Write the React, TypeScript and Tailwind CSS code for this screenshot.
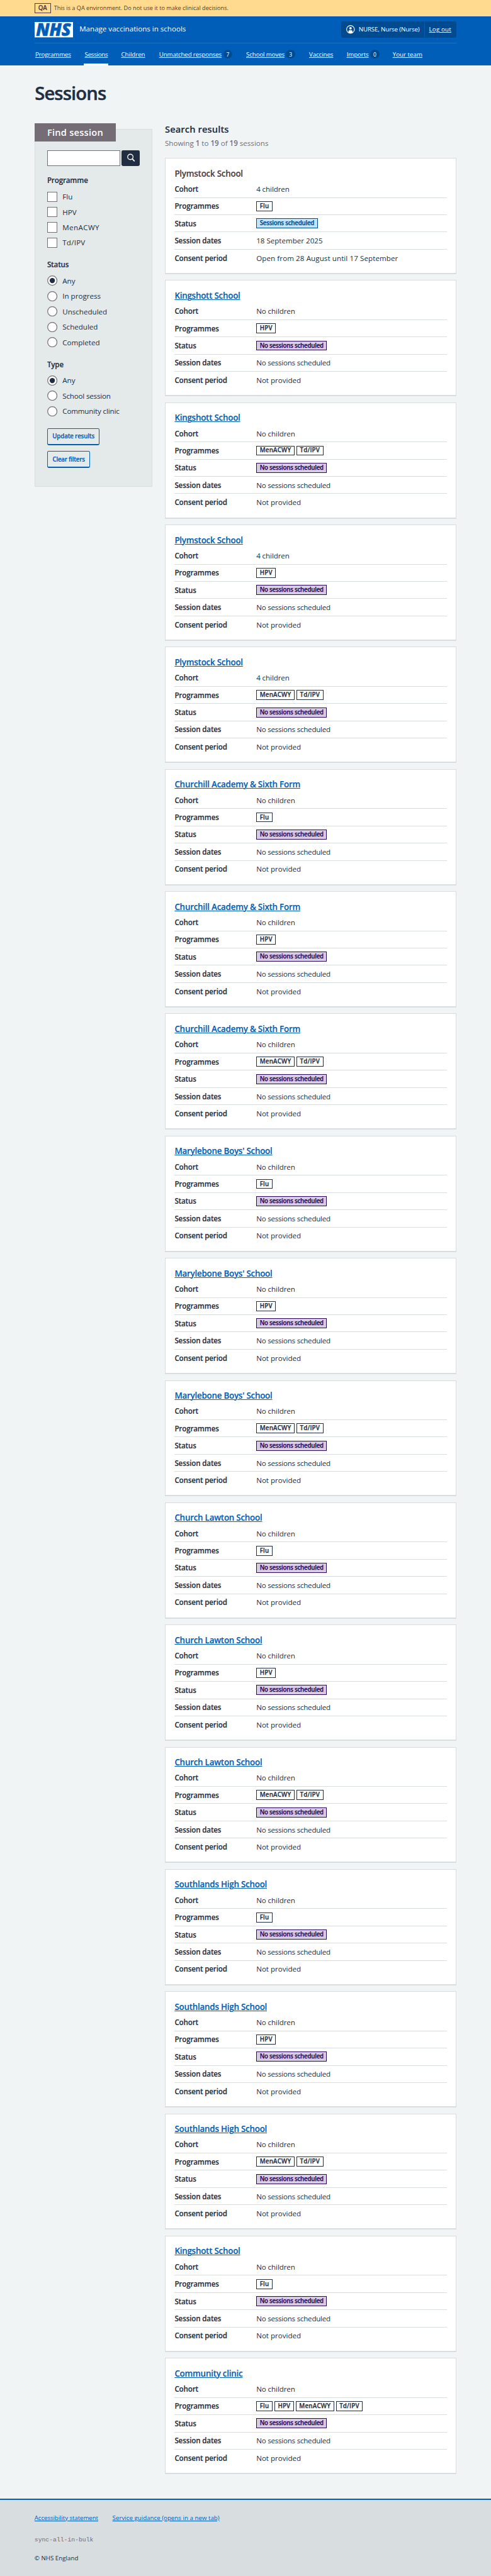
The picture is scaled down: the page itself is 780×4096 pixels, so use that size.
import type { ReactNode } from "react";

type Session = {
  name: string;
  cohort?: string;
  programmes: string[];
  visited?: boolean;
};

const FLU = ["Flu"];
const HPV = ["HPV"];
const DOUBLES = ["MenACWY", "Td/IPV"];

const sessions: Session[] = [
  { name: "Plymstock School", cohort: "4 children", programmes: FLU, visited: true },
  { name: "Kingshott School", programmes: HPV },
  { name: "Kingshott School", programmes: DOUBLES },
  { name: "Plymstock School", cohort: "4 children", programmes: HPV },
  { name: "Plymstock School", cohort: "4 children", programmes: DOUBLES },
  { name: "Churchill Academy & Sixth Form", programmes: FLU },
  { name: "Churchill Academy & Sixth Form", programmes: HPV },
  { name: "Churchill Academy & Sixth Form", programmes: DOUBLES },
  { name: "Marylebone Boys' School", programmes: FLU },
  { name: "Marylebone Boys' School", programmes: HPV },
  { name: "Marylebone Boys' School", programmes: DOUBLES },
  { name: "Church Lawton School", programmes: FLU },
  { name: "Church Lawton School", programmes: HPV },
  { name: "Church Lawton School", programmes: DOUBLES },
  { name: "Southlands High School", programmes: FLU },
  { name: "Southlands High School", programmes: HPV },
  { name: "Southlands High School", programmes: DOUBLES },
  { name: "Kingshott School", programmes: FLU },
  { name: "Community clinic", programmes: ["Flu", "HPV", "MenACWY", "Td/IPV"] },
];

const navItems = [
  { label: "Programmes", box: "w-[78.6px]", text: "tracking-[-0.019em]" },
  { label: "Sessions", box: "w-[57.9px]", text: "tracking-[-0.03em]", current: true },
  { label: "Children", box: "w-[60.3px]", text: "tracking-[-0.005em]" },
  { label: "Unmatched responses", box: "w-[138.3px]", text: "tracking-[-0.016em]", count: 7 },
  { label: "School moves", box: "w-[99.9px]", text: "tracking-[-0.014em]", count: 3 },
  { label: "Vaccines", box: "w-[59.7px]", text: "tracking-[-0.01em]" },
  { label: "Imports", box: "w-[73.1px]", text: "tracking-[-0.01em]", count: 0 },
  { label: "Your team", box: "", text: "" },
];

function NhsLogo() {
  return (
    <svg className="h-[24.4px] w-[61px] shrink-0 overflow-visible" viewBox="0 0 100 40" role="img" aria-label="NHS">
      <rect width="100" height="40" fill="#fff" />
      <text
        x="3.500"
        y="36.500"
        textLength="91"
        lengthAdjust="spacingAndGlyphs"
        fontFamily="'Open Sans', sans-serif"
        fontSize="45"
        fontWeight="800"
        fontStyle="italic"
        fill="#005eb8"
        stroke="#005eb8"
        strokeWidth="1"
      >
        NHS
      </text>
    </svg>
  );
}

function Header() {
  return (
    <header className="h-[78px] bg-[#005eb8] px-[54.8px] text-white">
      <div className="flex h-[43.4px] items-center justify-between border-b border-[#1f71c1]">
        <div className="flex items-center gap-[10.4px]">
          <NhsLogo />
          <span className="mb-[1.4px] text-[11.58px] leading-[18px]">Manage vaccinations in schools</span>
        </div>
        <div className="flex h-[25.6px] w-[183px] items-center rounded-[2.4px] bg-[#004b8f] text-[9.75px] leading-[15px]">
          <div className="flex h-[24.4px] w-[132.4px] items-center border-r border-[#005eb8] pl-[8.2px]">
            <svg className="mr-[5.8px] size-[13.6px] shrink-0" viewBox="0 0 22 22">
              <circle cx="11" cy="11" r="10" fill="none" stroke="#fff" strokeWidth="1.8" />
              <circle cx="11" cy="8.2" r="3.3" fill="#fff" />
              <path d="M5.8 20v-3.4c0-2.2 1.600-3.600 3.600-3.600h3.200c2 0 3.600 1.400 3.600 3.600V20c-3 1.600-7.400 1.600-10.400 0Z" fill="#fff" />
            </svg>
            <span className="whitespace-nowrap tracking-[-0.014em]">NURSE, Nurse (Nurse)</span>
          </div>
          <a className="pl-[7px] tracking-[0.018em] underline decoration-1 underline-offset-1">Log out</a>
        </div>
      </div>
      <nav className="flex h-[34.6px] pl-[1.2px] text-[9.75px] leading-[15px]">
        {navItems.map((item) => (
          <div key={item.label} className={`relative flex shrink-0 items-center gap-[2.4px] whitespace-nowrap ${item.box}`}>
            <a className={`underline decoration-1 underline-offset-1 ${item.text}`}>{item.label}</a>
            {item.count !== undefined && (
              <span className="flex h-[13.6px] w-[14.6px] items-center justify-center rounded-full bg-[#004b8f] text-[8.5px]">
                {item.count}
              </span>
            )}
            {item.current && <span className="absolute bottom-0 left-[-1.4px] h-[2.4px] w-[38.4px] bg-white" />}
          </div>
        ))}
      </nav>
    </header>
  );
}

function FilterHeading({ children, className }: { children: ReactNode; className: string }) {
  return (
    <h3 className={`text-[11.58px] leading-[17px] font-semibold tracking-[-0.012em] [-webkit-text-stroke:0.15px] ${className}`}>
      {children}
    </h3>
  );
}

const choiceTracking: Record<string, string> = {
  MenACWY: "tracking-[0.035em]",
  "Td/IPV": "tracking-[0.02em]",
  "Community clinic": "tracking-[-0.013em]",
  "School session": "tracking-[-0.015em]",
};

function Choice({ label, kind, checked }: { label: string; kind: "checkbox" | "radio"; checked?: boolean }) {
  return (
    <div className="flex h-[24.375px] items-center gap-[8.2px]">
      {kind === "checkbox" ? (
        <span className="h-[16.6px] w-[16.2px] border border-[#746d76] bg-white" />
      ) : (
        <svg className="size-[16.2px]" viewBox="0 0 27 27">
          <circle cx="13.500" cy="13.500" r="12.400" fill="#fff" stroke="#746d76" strokeWidth="2" />
          {checked && <circle cx="13.500" cy="13.500" r="7" fill="#212e42" />}
        </svg>
      )}
      <span className={`text-[11.58px] leading-[17px] ${choiceTracking[label] ?? ""}`}>{label}</span>
    </div>
  );
}

function FilterButton({ children, className }: { children: ReactNode; className: string }) {
  return (
    <button
      className={`block h-[26.8px] rounded-[2.4px] border border-b-2 border-[#005eb8] text-[9.75px] leading-[15px] font-semibold whitespace-nowrap text-[#005eb8] [-webkit-text-stroke:0.2px] ${className}`}
    >
      {children}
    </button>
  );
}

function Filters() {
  return (
    <aside className="w-[187.7px] shrink-0 pt-[9.2px]">
      <div className="h-[569.1px] border border-[#d8dde0] bg-[#e4e9e9] pl-[19.1px]">
        <h2 className="-mt-[10.2px] -ml-[20.1px] h-[29.25px] w-[129.4px] bg-[#746d76] pl-[20.2px] text-[14.63px] leading-[29px] font-semibold tracking-[0.016em] whitespace-nowrap text-white">
          Find session
        </h2>
        <div className="mt-[14.6px] flex h-[24.4px] gap-[2.4px]">
          <div className="w-[116px] border border-[#746d76] bg-white" />
          <div className="flex w-[29.2px] items-center justify-center rounded-[2.4px] bg-[#212e42]">
            <svg className="-mt-[0.5px] h-[14px] w-[14px]" viewBox="0 0 23 23" fill="none" stroke="#fff">
              <circle cx="10" cy="9" r="7" strokeWidth="2.200" />
              <path d="M15 14.200l5.200 5.400" strokeWidth="2.800" strokeLinecap="round" />
            </svg>
          </div>
        </div>
        <FilterHeading className="mt-[13.8px] mb-[6px]">Programme</FilterHeading>
        {["Flu", "HPV", "MenACWY", "Td/IPV"].map((label) => (
          <Choice key={label} kind="checkbox" label={label} />
        ))}
        <FilterHeading className="mt-[13.4px] mb-[5.9px]">Status</FilterHeading>
        {["Any", "In progress", "Unscheduled", "Scheduled", "Completed"].map((label) => (
          <Choice key={label} kind="radio" label={label} checked={label === "Any"} />
        ))}
        <FilterHeading className="mt-[14.4px] mb-[5.1px]">Type</FilterHeading>
        {["Any", "School session", "Community clinic"].map((label) => (
          <Choice key={label} kind="radio" label={label} checked={label === "Any"} />
        ))}
        <FilterButton className="mt-[14.9px] w-[83.500px] pt-[0.6px] tracking-[-0.018em]">Update results</FilterButton>
        <FilterButton className="mt-[9.7px] w-[68.400px] pt-[0.6px] tracking-[-0.024em]">Clear filters</FilterButton>
      </div>
    </aside>
  );
}

const tagTones = {
  plain: "border-[#212e42] bg-white text-[#212e42]",
  blue: "border-[#004b8f] bg-[#c0e5f8] text-[#004b8f]",
  purple: "border-[#2d0657] bg-[#d6cce3] text-[#2d0657]",
};

function Tag({ tone = "plain", children }: { tone?: keyof typeof tagTones; children: ReactNode }) {
  const spacing = tone === "plain" ? "tracking-[0.02em]" : "tracking-[-0.024em]";
  return (
    <span
      className={`flex h-[15.9px] items-center border px-[4.5px] text-[9.75px] leading-[14px] font-semibold whitespace-nowrap [-webkit-text-stroke:0.25px] ${spacing} ${tagTones[tone]}`}
    >
      {children}
    </span>
  );
}

function Row({ label, children, last }: { label: string; children: ReactNode; last?: boolean }) {
  return (
    <div className={`flex h-[27.42px] items-center border-b ${last ? "border-transparent" : "border-[#d8dde0]"}`}>
      <dt className="w-[129.8px] shrink-0 font-semibold tracking-[-0.012em] [-webkit-text-stroke:0.15px]">{label}</dt>
      <dd className="flex gap-[3px]">{children}</dd>
    </div>
  );
}

function SessionCard({ session }: { session: Session }) {
  const scheduled = session.visited;
  return (
    <article className="h-[184.75px] border border-b-2 border-[#d8dde0] bg-white px-[14.4px] pt-[14.5px]">
      <h3 className="mb-[2.6px] text-[13.4px] leading-[18px] font-semibold tracking-[-0.018em] [-webkit-text-stroke:0.15px]">
        {scheduled ? (
          <a className="text-[#4f3b42]">{session.name}</a>
        ) : (
          <a className="text-[#005eb8] underline decoration-[1.2px] underline-offset-[1.4px]">{session.name}</a>
        )}
      </h3>
      <dl className="text-[11.58px] leading-[17px]">
        <Row label="Cohort">
          <span className="tracking-[-0.008em]">{session.cohort ?? "No children"}</span>
        </Row>
        <Row label="Programmes">
          {session.programmes.map((programme) => (
            <Tag key={programme}>{programme}</Tag>
          ))}
        </Row>
        <Row label="Status">
          {scheduled ? <Tag tone="blue">Sessions scheduled</Tag> : <Tag tone="purple">No sessions scheduled</Tag>}
        </Row>
        <Row label="Session dates">
          {scheduled ? <span>18 September 2025</span> : <span className="tracking-[-0.02em]">No sessions scheduled</span>}
        </Row>
        <Row label="Consent period" last>
          {scheduled ? (
            <span className="tracking-[0.008em]">Open from 28 August until 17 September</span>
          ) : (
            <span>Not provided</span>
          )}
        </Row>
      </dl>
    </article>
  );
}

export default function App() {
  return (
    <div className="flex h-[4096px] w-[780px] flex-col overflow-hidden bg-[#f0f4f5] font-['Open_Sans','Noto_Sans',sans-serif] text-[#212e42]">
      <div className="flex h-[25.6px] shrink-0 items-center gap-[5.1px] bg-[#ffda8f] px-[54.8px] text-[#4f3b42]">
        <span className="flex h-[15.9px] w-[25.8px] items-center justify-center border border-[#4f3b42] text-[9.75px] leading-[14px] font-semibold [-webkit-text-stroke:0.2px]">
          QA
        </span>
        <span className="mt-[1px] text-[9.14px] leading-[14px]">
          This is a QA environment. Do not use it to make clinical decisions.
        </span>
      </div>
      <Header />
      <main className="px-[54.8px] pt-[26.1px]">
        <h1 className="pl-[0.4px] text-[29.25px] leading-[36px] font-semibold tracking-[-0.03em] [-webkit-text-stroke:0.4px]">
          Sessions
        </h1>
        <div className="mt-[29.9px] flex items-start gap-[19.5px]">
          <Filters />
          <section className="min-w-0 flex-1">
            <h2 className="text-[14.63px] leading-[18px] font-semibold tracking-[0.009em] [-webkit-text-stroke:0.15px]">
              Search results
            </h2>
            <p className="mt-[5px] text-[11.58px] leading-[17px] text-[#746d76]">
              Showing <b className="font-semibold">1</b> to <b className="font-semibold">19</b> of{" "}
              <b className="font-semibold">19</b> sessions
            </p>
            <div className="mt-[15.5px] flex flex-col gap-[9.6px]">
              {sessions.map((session, index) => (
                <SessionCard key={index} session={session} />
              ))}
            </div>
          </section>
        </div>
      </main>
      <footer className="mt-auto h-[122.9px] shrink-0 border-t-2 border-[#005eb8] bg-[#d8dde0] px-[54.8px] pt-[20.8px] text-[9.75px] leading-[15px]">
        <div className="flex gap-[22.6px] text-[#005eb8]">
          <a className="tracking-[-0.01em] underline decoration-1 underline-offset-1">Accessibility statement</a>
          <a className="underline decoration-1 underline-offset-1">Service guidance (opens in a new tab)</a>
        </div>
        <p className="mt-[20.3px] font-['Liberation_Mono',monospace] text-[#746d76]">sync-all-in-bulk</p>
        <p className="mt-[14.2px]">© NHS England</p>
      </footer>
    </div>
  );
}
